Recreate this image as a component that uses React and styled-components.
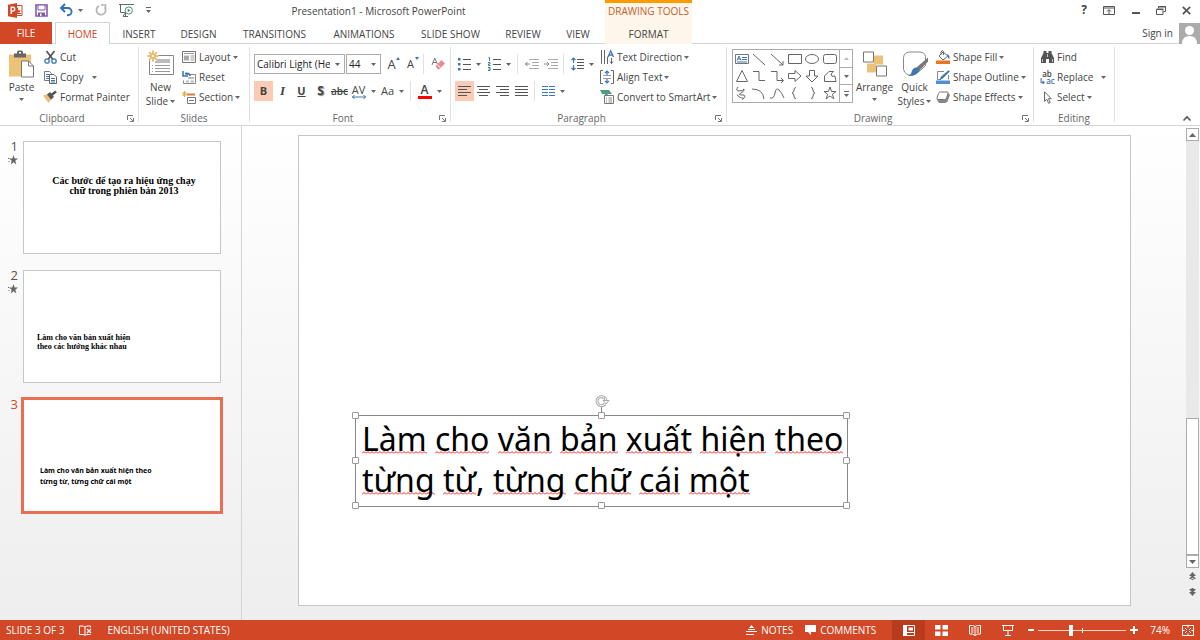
import React from 'react';
import styled, { createGlobalStyle } from 'styled-components';

const squiggle =
  "url(\"data:image/svg+xml,%3Csvg xmlns='http://www.w3.org/2000/svg' width='4' height='3'%3E%3Cpath d='M0 2.5L2 .5L4 2.5' fill='none' stroke='%23f02020'/%3E%3C/svg%3E\")";

const GlobalStyle = createGlobalStyle`
  * {
    box-sizing: border-box;
  }

  body {
    margin: 0;
    font-family: 'Open Sans', 'Noto Sans', sans-serif;
    font-size: 10px;
    line-height: 14px;
    color: #444;
    background: #fff;
  }

  button,
  select {
    margin: 0;
    padding: 0;
    border: 0;
    background: none;
    font: inherit;
    color: inherit;
    white-space: nowrap;
  }
`;

const App = () => (
  <Window>
    <GlobalStyle />
    <TitleBar />
    <Ribbon />
    <Main>
      <SlidePanel />
      <Editor />
    </Main>
    <StatusBar />
  </Window>
);

export default App;

/* ---------- icons ---------- */

const Icon = ({ w = 14, h = w, children }) => (
  <Svg width={w} height={h} viewBox={`0 0 ${w} ${h}`} aria-hidden="true">
    {children}
  </Svg>
);

const Svg = styled.svg`
  display: block;
  flex: none;
  fill: none;
  stroke-width: 1;
  overflow: visible;
`;

const Caret = () => (
  <Icon w={5} h={3}>
    <path d="M0 0h5L2.5 3z" fill="#666" />
  </Icon>
);

const PowerPointIcon = () => (
  <Icon w={15} h={15}>
    <path d="M6 2.5h8v10H6" fill="#fff" stroke="#d24726" />
    <path d="M10 4.500a2.600 2.600 0 1 0 2.500 2.700H10z" fill="#d24726" />
    <path d="M8 10.5h5M8 5h1" stroke="#d24726" />
    <path d="M0 1.8L9 0v15L0 13.2z" fill="#d24726" />
    <path d="M3.2 11V4.2h1.6a1.9 1.9 0 0 1 0 3.9H3.2" stroke="#fff" strokeWidth="1.4" />
  </Icon>
);

const SaveIcon = () => (
  <Icon w={13}>
    <path d="M1 1h11v11H1z" stroke="#8357b0" strokeWidth="1.6" />
    <path d="M3 1h7v5H3z" fill="#fff" stroke="#8357b0" />
    <path d="M3 8.5h7V12H3z" fill="#8357b0" />
    <path d="M5 9.5h1.5V12H5z" fill="#fff" />
  </Icon>
);

const UndoIcon = () => (
  <Icon w={13} h={12}>
    <path d="M2 4h6a3.6 3.6 0 0 1 0 7.2H7" stroke="#2f6fb7" strokeWidth="1.9" />
    <path d="M5 0L1 4l4 4" stroke="#2f6fb7" strokeWidth="1.9" />
  </Icon>
);

const RedoIcon = () => (
  <Icon w={12}>
    <path d="M9.600 3.200A4.600 4.600 0 1 1 4 2" stroke="#b4b4b4" strokeWidth="1.7" />
    <path d="M6 1h4.5v4.5" stroke="#b4b4b4" strokeWidth="1.5" />
  </Icon>
);

const StartShowIcon = () => (
  <Icon w={15} h={14}>
    <path d="M0 1.5h15M1.5 2v7.5H6M4 13l2.5-3M6.5 9.5v4M4 13.5h5" stroke="#666" />
    <circle cx="9.8" cy="7.5" r="3.6" fill="#fff" stroke="#4c8f76" />
    <path d="M8.7 5.7v3.6l3-1.8z" fill="#4c8f76" />
  </Icon>
);

const CustomizeIcon = () => (
  <Icon w={5} h={6}>
    <path d="M0 .5h5" stroke="#666" />
    <path d="M0 3h5L2.5 6z" fill="#666" />
  </Icon>
);

const PasteIcon = () => (
  <Icon w={25} h={27}>
    <path d="M0 4h22v22H0z" fill="#ecc277" />
    <path d="M5 3h3V1.5Q8 0 9.5 0h3Q14 0 14 1.5V3h3v4H5z" fill="#666" />
    <path d="M10 1.5h2V3h-2z" fill="#fff" />
    <path d="M12.500 10.500h7l5 5v11h-12z" fill="#fff" stroke="#777" />
    <path d="M19.5 10.5v5h5" stroke="#777" />
  </Icon>
);

const CutIcon = () => (
  <Icon w={13}>
    <path d="M2.5 0L9 8.5M10.5 0L4 8.5" stroke="#555" strokeWidth="1.7" />
    <circle cx="3" cy="10" r="2.2" stroke="#3f77b5" strokeWidth="1.3" />
    <circle cx="10" cy="10" r="2.2" stroke="#3f77b5" strokeWidth="1.3" />
  </Icon>
);

const CopyIcon = () => (
  <Icon w={13}>
    <path d="M.5.5h5l2 2v7h-7z" fill="#fff" stroke="#777" />
    <path d="M2 3.5h3M2 5.5h3M2 7.5h3" stroke="#3f77b5" />
    <path d="M5.5 3.5H10L12.5 6v6.5h-7z" fill="#fff" stroke="#666" />
    <path d="M7 7.5h4M7 9.5h4M7 11h4" stroke="#3f77b5" />
  </Icon>
);

const PainterIcon = () => (
  <Icon w={14} h={12}>
    <path d="M0 4.500L5 3l4 4.500L5.500 12z" fill="#ecbd74" />
    <path d="M4 3.500l3-2.500L11 6 8 8.500z" fill="#555" />
    <path d="M8.500 4L13 .5" stroke="#555" strokeWidth="2.5" />
  </Icon>
);

const NewSlideIcon = () => (
  <Icon w={26} h={26}>
    <path d="M1.5 4.5h24v19h-24z" fill="#fff" stroke="#888" />
    <path d="M7 8h15v4H7z" fill="#bbb" />
    <path d="M7 14.5h15M7 17.5h15M7 20.5h15M4 14.5h1M4 17.5h1M4 20.5h1" stroke="#999" />
    <circle cx="5" cy="5" r="5.5" fill="#fff" />
    <path d="M5-.5v11M-.5 5h11M1.2 1.2l7.6 7.6M8.8 1.2L1.2 8.8" stroke="#e9a847" strokeWidth="1.5" />
    <circle cx="5" cy="5" r="2" fill="#fff" stroke="#e9a847" />
  </Icon>
);

const LayoutIcon = () => (
  <Icon w={14} h={13}>
    <path d="M.5.5h13v11H.5z" fill="#fff" stroke="#777" />
    <path d="M2 2.5h10" stroke="#999" />
    <path d="M2 4.500h5v5H2z" fill="#aaa" />
    <path d="M8.500 5h4M8.500 7h4M8.500 9h4" stroke="#999" />
  </Icon>
);

const ResetIcon = () => (
  <Icon w={14} h={13}>
    <path d="M3.5 3.5h10v9h-12v-3" fill="#fff" stroke="#888" />
    <path d="M6 6h6v2H6zM4 9.500h3v2H4zM8.500 9.500H12v2H8.500z" fill="#bbb" />
    <path d="M8 5Q8 1.500 3 2.500M1 0v5h5" stroke="#3473b7" strokeWidth="1.5" />
  </Icon>
);

const SectionIcon = () => (
  <Icon w={14} h={13}>
    <path d="M5 3.5h8" stroke="#d87a3b" strokeWidth="2" />
    <path d="M5.5 6.5h8v6h-8z" fill="#fff" stroke="#777" />
    <path d="M7 9.5h5" stroke="#777" />
    <path d="M2.500 0v6M0 3h5M.8 1l3.600 4M4.400 1L.8 5" stroke="#e9a847" />
  </Icon>
);

const EraserIcon = () => (
  <Icon w={14}>
    <path d="M1 8L3.7 1l2.700 6M2 5.500h3.500" stroke="#777" />
    <path d="M4.500 9l6-6L14 6.500l-6 6H7z" fill="#e78b94" />
    <path d="M6 7.500l3.500 3.500" stroke="#fff" />
  </Icon>
);

const KerningIcon = () => (
  <Icon w={14} h={4}>
    <path d="M0 2h14M2.5 0L.5 2l2 2M11.5 0l2 2-2 2" stroke="#3f77b5" />
  </Icon>
);

const Lines = ({ d }) => (
  <Icon w={13} h={12}>
    <path d={d} stroke="#555" />
  </Icon>
);

const BulletsIcon = () => (
  <Icon w={13} h={14}>
    <path d="M5 2.5h8M5 7.5h8M5 12.5h8" stroke="#555" />
    <path d="M0 1h2.5v2.5H0zM0 6h2.5v2.5H0zM0 11h2.5v2.5H0z" fill="#3f77b5" />
  </Icon>
);

const NumberingIcon = () => (
  <Icon w={13} h={14}>
    <path d="M5 2.5h8M5 7.5h8M5 12.5h8" stroke="#555" />
    <path d="M.5.5h1V4M0 5.500h2V7H.5v1.500h2M0 10.500h2v3H0M.5 12H2" stroke="#3f77b5" />
  </Icon>
);

const IndentIcon = ({ flip }) => (
  <Icon w={14} h={12}>
    <path d="M4 1.5h10M7 4.5h7M7 7.5h7M4 10.5h10" stroke="#aaa" />
    <path d={flip ? 'M0 6h5M3 4l2 2-2 2' : 'M0 6h5M2.5 4L.5 6l2 2'} stroke="#888" />
  </Icon>
);

const LineSpacingIcon = () => (
  <Icon w={13} h={14}>
    <path d="M6 2.5h7M6 5.5h7M6 8.5h7M6 11.5h7" stroke="#555" />
    <path d="M2.500 1v5M.5 3l2-2 2 2M2.500 8v5M.5 11l2 2 2-2" stroke="#3f77b5" strokeWidth="1.2" />
  </Icon>
);

const ColumnsIcon = () => (
  <Icon w={13} h={10}>
    <path d="M0 .5h6M0 3.5h6M0 6.5h6M0 9.5h6M7 .5h6M7 3.5h6M7 6.5h6M7 9.5h6" stroke="#3f77b5" />
  </Icon>
);

const DirectionIcon = () => (
  <Icon w={13} h={14}>
    <path d="M.5 0v14M3.5 0v14M6.500 7v7M10.500 8v6" stroke="#666" />
    <path d="M9 11.500l1.500 2 1.500-2" stroke="#666" />
    <path d="M7 7L9.700.8 12.500 7M8 5h3.500" stroke="#3f77b5" strokeWidth="1.3" />
  </Icon>
);

const AlignTextIcon = () => (
  <Icon w={14}>
    <path d="M3 .5H.5v13H3M11 .5h2.5v13H11" stroke="#666" />
    <path d="M3 5.5h8M3 8.5h8" stroke="#999" />
    <path d="M7 1v4M5 3l2-2 2 2M7 9v4M5 11l2 2 2-2" stroke="#3f77b5" strokeWidth="1.2" />
  </Icon>
);

const SmartArtIcon = () => (
  <Icon w={14}>
    <path d="M0 0h9l3 4H8L5 8V4H2z" fill="#4f9a80" />
    <path d="M4.5 5.5h9v8h-9z" fill="#fff" stroke="#777" />
    <path d="M6 8h1M8.5 8H12M6 10h1M8.5 10H12M6 12h1M8.5 12H12" stroke="#888" />
  </Icon>
);

const ArrangeIcon = () => (
  <Icon w={24} h={25}>
    <path d="M11 4h9v9h-9zM4 12h9v9H4z" fill="#ecc277" />
    <path d="M.5.5h10v10H.5z" fill="#fff" stroke="#777" />
    <path d="M13.5 14.5h10v10h-10z" fill="#fff" stroke="#777" />
  </Icon>
);

const QuickStylesIcon = () => (
  <Icon w={26} h={27}>
    <path d="M6 24.500Q2 22 1.500 19V7Q2 2 7 1.500h11Q23 2 23.500 6v9l-5 5-10 4.500z" fill="#fff" stroke="#888" />
    <path d="M26 7v4l-8.500 9-3-3z" fill="#777" />
    <path d="M14 17q3 0 3.500 3.500Q14 26 6.500 25.500q3-1.500 3-4Q11 17 14 17z" fill="#3f77b5" />
  </Icon>
);

const FillIcon = () => (
  <Icon w={14}>
    <path d="M3 6l4-4 5 4-5 4z" fill="#fff" stroke="#666" />
    <path d="M5 5V2q1.500-3 2.500 0v3" stroke="#666" />
    <path d="M11 4q3 1 2.500 5-2-1-2-3.500" fill="#3f77b5" />
    <path d="M0 10.500h14V14H0z" fill="#e97424" />
  </Icon>
);

const OutlineIcon = () => (
  <Icon w={14}>
    <path d="M8 1.500H1.500v8H5M12.500 5v4.500" stroke="#888" />
    <path d="M12.500.5l1 1-7 7-2.500 1 1-2.500z" fill="#3f77b5" stroke="#3f77b5" strokeWidth=".5" />
    <path d="M0 10.500h14V14H0z" fill="#4f8fd2" />
  </Icon>
);

const EffectsIcon = () => (
  <Icon w={14} h={13}>
    <path d="M1 9l2 3h6.500l2-1.500L14 4l-2-2.500z" fill="#888" />
    <path d="M4.500 1h6.500q1.500 0 1 1.500L10.500 7q-.5 1.500-2 1.500H2Q.5 8.500 1 7l1.500-4.500Q3 1 4.500 1z" fill="#fff" stroke="#777" />
  </Icon>
);

const FindIcon = () => (
  <Icon w={13} h={12}>
    <path d="M2.5 0h3v2h2V0h3v2L13 7v5H8V8H5v4H0V7l2.5-5z" fill="#555" />
    <path d="M1.5 8v3M11.5 8v3M6.5 3v3" stroke="#ddd" strokeWidth=".8" />
  </Icon>
);

const SelectIcon = () => (
  <Icon w={9} h={13}>
    <path d="M1.5.8v9.5l2.3-2 1.8 4 1.6-.8-1.7-3.8h2.8z" fill="#fff" stroke="#666" />
  </Icon>
);

const LauncherIcon = () => (
  <Icon w={7}>
    <path d="M.5 5V.5H6M3 3l3 3M6.5 3v3.5H3" stroke="#777" />
  </Icon>
);

const StarIcon = () => (
  <Icon w={10}>
    <path d="M5.5 0l1.2 3.5H10L7.3 5.7l1 3.8-2.8-2.2-2.8 2.2 1-3.8L1 3.5h3.3zM0 3h1v1H0zM.5 6h1v1h-1z" fill="#666" />
  </Icon>
);

/* ---------- title bar and tabs ---------- */

const tabs = [
  ['HOME', 55],
  ['INSERT', 58],
  ['DESIGN', 61],
  ['TRANSITIONS', 91],
  ['ANIMATIONS', 88],
  ['SLIDE SHOW', 85],
  ['REVIEW', 60],
  ['VIEW', 50],
];

const TitleBar = () => (
  <Header>
    <TitleRow>
      <QuickAccess>
        <PowerPointIcon />
        <PlainButton aria-label="Save"><SaveIcon /></PlainButton>
        <PlainButton aria-label="Undo"><UndoIcon /><Caret /></PlainButton>
        <PlainButton aria-label="Redo"><RedoIcon /></PlainButton>
        <PlainButton aria-label="Start slide show"><StartShowIcon /></PlainButton>
        <PlainButton aria-label="Customize"><CustomizeIcon /></PlainButton>
      </QuickAccess>
      <Title>Presentation1 - Microsoft PowerPoint</Title>
    </TitleRow>
    <Contextual>
      <span>DRAWING TOOLS</span>
      <Tab $w={87}>FORMAT</Tab>
    </Contextual>
    <WindowControls>
      <PlainButton aria-label="Help">
        <HelpMark>?</HelpMark>
      </PlainButton>
      <PlainButton aria-label="Ribbon display options">
        <Icon w={12} h={9}>
          <path d="M.5.5h11v8H.5zM0 2h12M6 8V4M4 5.5l2-2 2 2" stroke="#555" />
        </Icon>
      </PlainButton>
      <PlainButton aria-label="Minimize">
        <Icon w={9} h={9}><path d="M1 7h8" stroke="#555" strokeWidth="2" /></Icon>
      </PlainButton>
      <PlainButton aria-label="Restore">
        <Icon w={10} h={9}>
          <path d="M2.5 2V.5h7v5h-2M.5 3.5H7v5H.5zM.5 3h7M2 1h8" stroke="#555" />
        </Icon>
      </PlainButton>
      <PlainButton aria-label="Close">
        <Icon w={9} h={9}><path d="M.8.8l7.4 7.4M8.2.8L.8 8.2" stroke="#555" strokeWidth="1.7" /></Icon>
      </PlainButton>
    </WindowControls>
    <TabRow>
      <FileTab>FILE</FileTab>
      {tabs.map(([name, w]) => (
        <Tab key={name} $w={w} $active={name === 'HOME'}>{name}</Tab>
      ))}
    </TabRow>
    <Account>
      <PlainButton>Sign in</PlainButton>
      <Icon w={21} h={21}>
        <path d="M0 0h21v21H0z" fill="#ababab" />
        <circle cx="10.5" cy="7.5" r="4.5" fill="#fff" />
        <path d="M3 21q0-8 7.500-8t7.500 8z" fill="#fff" />
      </Icon>
    </Account>
  </Header>
);

const Window = styled.div`
  display: flex;
  flex-direction: column;
  min-height: 100vh;
`;

const Header = styled.header`
  display: grid;
  grid-template-columns: auto auto 1fr;
  grid-template-rows: 22px 22px;
  border-bottom: 1px solid #d4d4d4;
  height: 44px;
`;

const TitleRow = styled.div`
  display: flex;
  align-items: center;
`;

const QuickAccess = styled.div`
  display: flex;
  align-items: center;
  flex: none;
  gap: 12px;
  width: 152px;
  padding-left: 8px;
  padding-bottom: 2px;
`;

const PlainButton = styled.button`
  display: flex;
  align-items: center;
  gap: 5px;
`;

const Title = styled.div`
  flex: 1;
  text-align: center;
`;

const Contextual = styled.div`
  grid-row: 1 / span 2;
  grid-column: 2;
  display: flex;
  flex-direction: column;
  align-items: center;
  justify-content: space-between;
  padding-top: 1px;
  background: #fef6ea;
  border-top: 3px solid #ff9a00;
  color: #c5602c;
`;

const WindowControls = styled.div`
  display: flex;
  justify-content: flex-end;
  align-items: center;
  gap: 16px;
  padding-right: 9px;
  padding-bottom: 2px;
`;

const HelpMark = styled.b`
  font-size: 12px;
`;

const TabRow = styled.nav`
  grid-row: 2;
  grid-column: 1;
  display: flex;
  padding-right: 2px;
`;

const Tab = styled.button`
  width: ${({ $w }) => $w}px;
  height: 22px;
  text-align: center;
  color: ${({ $active }) => ($active ? '#d24726' : '#444')};
  background: ${({ $active }) => ($active ? '#fff' : 'none')};
  border: 1px solid ${({ $active }) => ($active ? '#d4d4d4' : 'transparent')};
  border-bottom: 0;
`;

const FileTab = styled.button`
  width: 52px;
  height: 22px;
  margin-right: 3px;
  background: #d24726;
  color: #fff;
`;

const Account = styled.div`
  grid-column: 3;
  display: flex;
  justify-content: flex-end;
  align-items: center;
  gap: 6px;
`;

/* ---------- ribbon ---------- */

const Command = ({ icon, label, caret, gap }) => (
  <CommandButton>
    <IconSlot>{icon}</IconSlot>
    {label}
    {caret && <CaretSlot $gap={gap}><Caret /></CaretSlot>}
  </CommandButton>
);

const Group = ({ name, width, launcher, children }) => (
  <GroupBox $w={width}>
    <GroupBody>{children}</GroupBody>
    <GroupFooter $launcher={launcher}>
      <span>{name}</span>
      {launcher && <Launcher aria-label={`${name} options`}><LauncherIcon /></Launcher>}
    </GroupFooter>
  </GroupBox>
);

const shapes = [
  <><path d="M1.5 3.5h13v9h-13z" stroke="#777" /><path d="M3 9.500L5 5l2 4.500M4 8h2M8 6.500h5M8 8.500h5M3 11h10" stroke="#3f77b5" /></>,
  <path d="M2 3l12 11" />,
  <path d="M2 3l12 11M14 10v4h-4" />,
  <path d="M1.5 3.5h13v9h-13z" />,
  <ellipse cx="8" cy="8" rx="6.5" ry="4.5" />,
  <rect x="1.5" y="3.5" width="13" height="9" rx="2" />,
  <path d="M8 2.500l5.500 11h-11z" />,
  <path d="M2 3.500h6v9h6" />,
  <path d="M2 3.500h6v9h6M12 10l2.500 2.500L12 15" />,
  <path d="M1.500 5.500H8v-3L14 8l-6 5.500v-3H1.500z" />,
  <path d="M5.500 2.500h5V8H14l-6 6-6-6h3.500z" />,
  <path d="M2.500 13.500V8L7 3.500h4.500Q9 5 9 7t4 1l1 5.500z" />,
  <path d="M4 2Q1 6 5 6t5-2q1 2-3 4t2 2q3 0 1 3t-2-1M3 10l4 3" />,
  <path d="M1 4q11 0 12 10" />,
  <path d="M1 13q4 1 5-5t4-3 5 8" />,
  <path d="M9 2.500Q7 2.500 7 5t-2 3q2 0 2 3t2 2.500" />,
  <path d="M7 2.500q2 0 2 2.500t2 3q-2 0-2 3t-2 2.500" />,
  <path d="M8 2l1.600 4.500H14l-3.600 2.800 1.400 4.500L8 11l-3.800 2.800 1.400-4.500L2 6.500h4.400z" />,
];

const Ribbon = () => (
  <RibbonBar>
    <Group name="Clipboard" width={139} launcher>
      <LargeButton $w={43}>
        <PasteIcon />
        <span>Paste</span>
        <Caret />
      </LargeButton>
      <Stack>
        <Command icon={<CutIcon />} label="Cut" />
        <Command icon={<CopyIcon />} label="Copy" caret gap={9} />
        <Command icon={<PainterIcon />} label="Format Painter" />
      </Stack>
    </Group>
    <Group name="Slides" width={111}>
      <LargeButton $w={43}>
        <NewSlideIcon />
        <span>New</span>
        <CaretLine>Slide <Caret /></CaretLine>
      </LargeButton>
      <Stack>
        <Command icon={<LayoutIcon />} label="Layout" caret />
        <Command icon={<ResetIcon />} label="Reset" />
        <Command icon={<SectionIcon />} label="Section" caret />
      </Stack>
    </Group>
    <Group name="Font" width={201} launcher>
      <Rows>
        <Row>
          <Combo $w={91}>
            <select aria-label="Font"><option>Calibri Light (Headings)</option></select>
            <Caret />
          </Combo>
          <Combo $w={35}>
            <select aria-label="Font size"><option>44</option></select>
            <Caret />
          </Combo>
          <Tool aria-label="Increase font size">
            <Glyph $size={13}>A</Glyph>
            <Raise><Icon w={4} h={3}><path d="M0 3h4L2 0z" fill="#3f77b5" /></Icon></Raise>
          </Tool>
          <Tool aria-label="Decrease font size">
            <Glyph $size={11}>A</Glyph>
            <Raise><Icon w={4} h={3}><path d="M0 0h4L2 3z" fill="#3f77b5" /></Icon></Raise>
          </Tool>
          <Rule />
          <Tool aria-label="Clear formatting"><EraserIcon /></Tool>
        </Row>
        <Row>
          <Tool $on aria-label="Bold"><Glyph as="b">B</Glyph></Tool>
          <Tool aria-label="Italic"><SerifGlyph>I</SerifGlyph></Tool>
          <Tool aria-label="Underline"><Glyph as="u">U</Glyph></Tool>
          <Tool aria-label="Shadow"><ShadowGlyph>S</ShadowGlyph></Tool>
          <Tool aria-label="Strikethrough"><Struck>abc</Struck></Tool>
          <Tool $w={29} aria-label="Character spacing">
            <KernBox><span>AV</span><KerningIcon /></KernBox>
            <Caret />
          </Tool>
          <Tool $w={29} aria-label="Change case"><Case>Aa</Case> <Caret /></Tool>
          <Rule />
          <Tool $w={29} aria-label="Font color">
            <ColorBar>A</ColorBar>
            <Caret />
          </Tool>
        </Row>
      </Rows>
    </Group>
    <Group name="Paragraph" width={276} launcher>
      <Rows $w={149}>
        <Row>
          <Tool $w={29} aria-label="Bullets"><BulletsIcon /><Caret /></Tool>
          <Tool $w={30} aria-label="Numbering"><NumberingIcon /><Caret /></Tool>
          <Rule />
          <Tool aria-label="Decrease indent"><IndentIcon /></Tool>
          <Tool aria-label="Increase indent"><IndentIcon flip /></Tool>
          <Rule />
          <Tool $w={29} aria-label="Line spacing"><LineSpacingIcon /><Caret /></Tool>
        </Row>
        <Row>
          <Tool $on aria-label="Align left"><Lines d="M0 1.5h13M0 4.5h9M0 7.5h13M0 10.5h9" /></Tool>
          <Tool aria-label="Center"><Lines d="M0 1.5h13M2 4.5h9M0 7.5h13M2 10.5h9" /></Tool>
          <Tool aria-label="Align right"><Lines d="M0 1.5h13M4 4.5h9M0 7.5h13M4 10.5h9" /></Tool>
          <Tool aria-label="Justify"><Lines d="M0 1.5h13M0 4.5h13M0 7.5h13M0 10.5h13" /></Tool>
          <Rule />
          <Tool $w={29} aria-label="Columns"><ColumnsIcon /><Caret /></Tool>
        </Row>
      </Rows>
      <Stack>
        <Command icon={<DirectionIcon />} label="Text Direction" caret />
        <Command icon={<AlignTextIcon />} label="Align Text" caret />
        <Command icon={<SmartArtIcon />} label="Convert to SmartArt" caret />
      </Stack>
    </Group>
    <Group name="Drawing" width={307} launcher>
      <Gallery>
        <ShapeGrid>
          {shapes.map((shape, i) => (
            <PlainButton key={i} aria-label={`Shape ${i + 1}`}>
              <Icon w={16}><g stroke="#666">{shape}</g></Icon>
            </PlainButton>
          ))}
        </ShapeGrid>
        <GalleryScroll>
          <button aria-label="Previous shapes"><Icon w={5} h={3}><path d="M0 3h5L2.5 0z" fill="#bbb" /></Icon></button>
          <button aria-label="Next shapes"><Caret /></button>
          <button aria-label="More shapes"><CustomizeIcon /></button>
        </GalleryScroll>
      </Gallery>
      <LargeButton $w={43}>
        <ArrangeIcon />
        <span>Arrange</span>
        <Caret />
      </LargeButton>
      <LargeButton $w={37}>
        <QuickStylesIcon />
        <span>Quick</span>
        <CaretLine>Styles <Caret /></CaretLine>
      </LargeButton>
      <Stack $inset={3}>
        <Command icon={<FillIcon />} label="Shape Fill" caret />
        <Command icon={<OutlineIcon />} label="Shape Outline" caret />
        <Command icon={<EffectsIcon />} label="Shape Effects" caret />
      </Stack>
    </Group>
    <Group name="Editing" width={81}>
      <Stack $inset={6}>
        <Command icon={<FindIcon />} label="Find" />
        <Command icon={<ReplaceMark><span>ab</span><span>↳ac</span></ReplaceMark>} label="Replace" caret gap={8} />
        <Command icon={<SelectIcon />} label="Select" caret />
      </Stack>
    </Group>
    <Collapse aria-label="Collapse the ribbon">
      <Icon w={8} h={5}><path d="M.5 4.5L4 1l3.5 3.5" stroke="#555" strokeWidth="1.6" /></Icon>
    </Collapse>
  </RibbonBar>
);

const RibbonBar = styled.section`
  display: flex;
  height: 82px;
  padding: 3px 0;
  border-bottom: 1px solid #d4d4d4;
`;

const GroupBox = styled.div`
  display: flex;
  flex-direction: column;
  flex: none;
  width: ${({ $w }) => $w}px;
  border-right: 1px solid #e1e1e1;
`;

const GroupBody = styled.div`
  display: flex;
  flex: 1;
`;

const GroupFooter = styled.div`
  position: relative;
  height: 8px;
  line-height: 8px;
  padding-right: ${({ $launcher }) => ($launcher ? 14 : 0)}px;
  text-align: center;
  color: #666;
`;

const Launcher = styled.button`
  position: absolute;
  right: 4px;
  top: 1px;
`;

const LargeButton = styled.button`
  display: flex;
  flex-direction: column;
  align-items: center;
  flex: none;
  width: ${({ $w }) => $w}px;
  height: 62px;
  padding-top: 3px;

  span {
    line-height: 14px;
  }

  > svg:first-child {
    height: 28px;
    margin-bottom: 2px;
  }

  > svg:last-child {
    margin-top: 4px;
  }
`;

const CaretLine = styled.span`
  display: flex;
  align-items: center;
  gap: 2px;
`;

const Stack = styled.div`
  display: flex;
  flex-direction: column;
  padding-left: ${({ $inset = 0 }) => $inset}px;
`;

const CommandButton = styled.button`
  display: flex;
  align-items: center;
  height: 20px;
`;

const IconSlot = styled.span`
  display: flex;
  justify-content: center;
  width: 14px;
  margin-right: 3px;
`;

const CaretSlot = styled.span`
  margin-left: ${({ $gap = 2 }) => $gap}px;
`;

const Rows = styled.div`
  display: flex;
  flex-direction: column;
  gap: 7px;
  flex: none;
  width: ${({ $w }) => ($w ? `${$w}px` : 'auto')};
  padding: 7px 0 0 4px;
`;

const Row = styled.div`
  display: flex;
  align-items: center;
  height: 20px;
`;

const Combo = styled.div`
  display: flex;
  align-items: center;
  gap: 5px;
  width: ${({ $w }) => $w}px;
  height: 20px;
  margin-right: 1px;
  padding: 0 4px 0 2px;
  border: 1px solid #ababab;
  color: #222;

  select {
    flex: 1;
    min-width: 0;
    appearance: none;
    overflow: hidden;
    text-overflow: clip;
  }
`;

const Tool = styled.button`
  position: relative;
  display: flex;
  align-items: center;
  justify-content: center;
  gap: 5px;
  flex: none;
  width: ${({ $w = 19 }) => $w}px;
  height: 20px;
  background: ${({ $on }) => ($on ? '#fbcbb5' : 'none')};
`;

const Glyph = styled.span`
  font-size: ${({ $size = 11 }) => $size}px;
  font-weight: ${({ $size }) => ($size ? 400 : 700)};
`;

const Raise = styled.i`
  position: absolute;
  top: 3px;
  right: 1px;
`;

const SerifGlyph = styled.i`
  font-family: 'Liberation Serif', serif;
  font-size: 13px;
  font-weight: 700;
`;

const ShadowGlyph = styled.b`
  font-size: 12px;
  text-shadow: 1px 1px 1px #888;
`;

const Struck = styled.s`
  font-weight: 600;
`;

const Case = styled.span`
  font-size: 11px;
`;

const KernBox = styled.span`
  display: flex;
  flex-direction: column;
  align-items: center;
  font-size: 11px;
  line-height: 11px;
`;

const ColorBar = styled.span`
  width: 14px;
  font-size: 12px;
  font-weight: 600;
  line-height: 12px;
  border-bottom: 3px solid #f00;
`;

const Rule = styled.span`
  width: 1px;
  height: 20px;
  margin: 0 4px 0 3px;
  background: #e1e1e1;
`;

const Gallery = styled.div`
  display: flex;
  flex: none;
  width: 121px;
  height: 54px;
  margin: 2px 0 0 5px;
  border: 1px solid #ababab;
`;

const ShapeGrid = styled.div`
  display: grid;
  flex: 1;
  grid-template-columns: repeat(6, 1fr);
  align-items: center;
  justify-items: center;
`;

const GalleryScroll = styled.div`
  display: flex;
  flex-direction: column;
  width: 13px;

  button {
    display: flex;
    flex: 1;
    align-items: center;
    justify-content: center;
    border-left: 1px solid #ababab;
  }

  button + button {
    border-top: 1px solid #ababab;
  }
`;

const ReplaceMark = styled.span`
  display: flex;
  flex-direction: column;
  font-size: 8px;
  font-weight: 600;
  line-height: 7px;

  span:last-child {
    color: #3f77b5;
  }
`;

const Collapse = styled.button`
  display: flex;
  align-items: flex-end;
  margin-left: auto;
  padding: 0 9px 1px 0;
`;

/* ---------- slide panel ---------- */

const SlidePanel = () => (
  <Panel>
    <ThumbRow>
      <Marker><span>1</span><StarIcon /></Marker>
      <Thumb>
        <CenteredCaption>
          Các bước để tạo ra hiệu ứng chạy<br />chữ trong phiên bản 2013
        </CenteredCaption>
      </Thumb>
    </ThumbRow>
    <ThumbRow>
      <Marker><span>2</span><StarIcon /></Marker>
      <Thumb>
        <LowerCaption>
          Làm cho văn bản xuất hiện<br />theo các hướng khác nhau
        </LowerCaption>
      </Thumb>
    </ThumbRow>
    <ThumbRow>
      <Marker $active><span>3</span></Marker>
      <Thumb $active>
        <SansCaption>
          Làm cho văn bản xuất hiện theo<br />từng từ, từng chữ cái một
        </SansCaption>
      </Thumb>
    </ThumbRow>
  </Panel>
);

const Main = styled.main`
  display: flex;
  flex: 1;
  background: linear-gradient(#fff, #eee);
`;

const Panel = styled.aside`
  display: flex;
  flex-direction: column;
  gap: 16px;
  flex: none;
  width: 242px;
  padding-top: 15px;
  border-right: 1px solid #d4d4d4;
`;

const ThumbRow = styled.div`
  display: flex;
`;

const Marker = styled.div`
  display: flex;
  flex-direction: column;
  align-items: flex-end;
  gap: 3px;
  flex: none;
  width: 18px;
  margin-right: 5px;
  font-size: 13px;
  line-height: 11px;
  color: ${({ $active }) => ($active ? '#d24726' : '#555')};
`;

const Thumb = styled.div`
  width: 198px;
  height: 113px;
  background: #fff;
  color: #000;
  outline: ${({ $active }) => ($active ? '2px solid #ea6f52' : 'none')};
  border: 1px solid ${({ $active }) => ($active ? '#ea6f52' : '#c6c6c6')};
`;

const Caption = styled.p`
  margin: 0;
  font-family: 'Liberation Serif', serif;
  font-weight: 700;
  white-space: nowrap;
`;

const CenteredCaption = styled(Caption)`
  padding-top: 34px;
  padding-left: 4px;
  font-size: 10px;
  line-height: 10px;
  text-align: center;
`;

const LowerCaption = styled(Caption)`
  padding: 62px 0 0 13px;
  font-size: 8px;
  line-height: 9px;
`;

const SansCaption = styled(Caption)`
  padding: 65px 0 0 16px;
  font-family: 'Noto Sans', sans-serif;
  font-size: 7px;
  line-height: 11px;
`;

/* ---------- slide editor ---------- */

const lines = [
  ['Làm', 'cho', 'văn', 'bản', 'xuất', 'hiện', 'theo'],
  ['từng', 'từ,', 'từng', 'chữ', 'cái', 'một'],
];

const handles = [
  [0, 0], [50, 0], [100, 0],
  [0, 50], [100, 50],
  [0, 100], [50, 100], [100, 100],
];

const Editor = () => (
  <EditorArea>
    <Slide>
      <TextBox>
        {lines.map((words, i) => (
          <Line key={i}>
            {words.map((word, j) => (
              <React.Fragment key={j}>
                <Misspelt>{word.replace(',', '')}</Misspelt>
                {word.endsWith(',') && ','}
                {j < words.length - 1 && ' '}
              </React.Fragment>
            ))}
          </Line>
        ))}
        {handles.map(([x, y]) => (
          <Handle key={`${x}-${y}`} $x={x} $y={y} />
        ))}
        <Rotate>
          <Icon w={14} h={21}>
            <path d="M6.5 11v7" stroke="#888" />
            <path d="M10 9a4.500 4.500 0 1 1 1-3" stroke="#aaa" strokeWidth="3" />
            <path d="M10 9a4.500 4.500 0 1 1 1-3" stroke="#fff" />
            <path d="M8 5.500h6L11 9z" fill="#fff" stroke="#aaa" />
          </Icon>
        </Rotate>
      </TextBox>
    </Slide>
    <Scroll>
      <ScrollButton aria-label="Scroll up"><Icon w={7} h={4}><path d="M0 4h7L3.5 0z" fill="#666" /></Icon></ScrollButton>
      <ScrollTrack><ScrollThumb /></ScrollTrack>
      <ScrollButton aria-label="Scroll down"><Icon w={7} h={4}><path d="M0 0h7L3.5 4z" fill="#666" /></Icon></ScrollButton>
      <PageButton aria-label="Previous slide">
        <Icon w={7} h={8}><path d="M0 4h7L3.5 0zM0 7h7L3.5 3zM2.5 6h2v2h-2z" fill="#666" /></Icon>
      </PageButton>
      <PageButton aria-label="Next slide">
        <Icon w={7} h={8}><path d="M0 1h7L3.5 5zM0 4h7L3.5 8zM2.5 0h2v2h-2z" fill="#666" /></Icon>
      </PageButton>
    </Scroll>
  </EditorArea>
);

const EditorArea = styled.div`
  display: flex;
  flex: 1;
  padding-left: 56px;
`;

const Slide = styled.div`
  position: relative;
  flex: 1;
  margin: 9px 55px 14px 0;
  background: #fff;
  border: 1px solid #c6c6c6;
`;

const TextBox = styled.div`
  position: absolute;
  left: 56px;
  top: 279px;
  padding: 2px 4px 6px 6px;
  border: 1px solid #888;
  font-family: 'Noto Sans', sans-serif;
  font-size: 32px;
  line-height: 41px;
  color: #000;
  white-space: nowrap;
`;

const Line = styled.div`
  height: 41px;
`;

const Misspelt = styled.span`
  background: ${squiggle} left bottom 6px / 4px 3px repeat-x;
`;

const Handle = styled.i`
  position: absolute;
  left: ${({ $x }) => $x}%;
  top: ${({ $y }) => $y}%;
  width: 7px;
  height: 7px;
  margin: -4px;
  background: #fff;
  border: 1px solid #999;
  border-radius: 1px;
`;

const Rotate = styled.i`
  position: absolute;
  left: 50%;
  bottom: 100%;
  margin-left: -7px;
`;

const Scroll = styled.div`
  display: flex;
  flex-direction: column;
  align-items: center;
  width: 13px;
  margin: 2px 1px 20px 0;
`;

const ScrollButton = styled.button`
  display: flex;
  align-items: center;
  justify-content: center;
  width: 13px;
  height: 13px;
  background: #fff;
  border: 1px solid #ababab;
`;

const ScrollTrack = styled.div`
  display: flex;
  flex: 1;
  width: 13px;
  align-items: flex-end;
  background: #e9e9e9;
`;

const ScrollThumb = styled.div`
  width: 13px;
  height: 33%;
  background: #fff;
  border: 1px solid #ababab;
`;

const PageButton = styled.button`
  display: flex;
  align-items: center;
  height: 16px;
`;

/* ---------- status bar ---------- */

const StatusBar = () => (
  <Status>
    <span>SLIDE 3 OF 3</span>
    <StatusButton aria-label="Spelling">
      <Icon w={13} h={11}>
        <path d="M6 10.5V2Q5 1 3 1H.5v8.5H4q1.5 0 2 1zM6 2q1-1 3-1h2.500v1.500M6 10.500q.5-1 2-1h3.500" stroke="#fff" />
        <path d="M8 4l4 4M12 4L8 8" stroke="#fff" strokeWidth="1.3" />
      </Icon>
    </StatusButton>
    <StatusButton>ENGLISH (UNITED STATES)</StatusButton>
    <StatusRight>
      <StatusButton>
        <Icon w={11} h={10}>
          <path d="M5.5 0L8 3H3zM2 4h7v1H2z" fill="#fff" />
          <path d="M0 6.5h11M0 9.5h8" stroke="#fff" />
        </Icon>
        NOTES
      </StatusButton>
      <StatusButton>
        <Icon w={11} h={10}><path d="M0 0h11v7H6v3L3 7H0z" fill="#fff" /></Icon>
        COMMENTS
      </StatusButton>
      <Views>
        <ViewButton $active aria-label="Normal view">
          <Icon w={12} h={11}>
            <path d="M.5.5h11v10H.5zM3.5 0v11M3.5 7.5H12" stroke="#fff" />
            <path d="M0 0h3v11H0zM5.500 2.500h4.500v3H5.500z" fill="#fff" />
          </Icon>
        </ViewButton>
        <ViewButton aria-label="Slide sorter">
          <Icon w={13} h={11}><path d="M0 0h5.5v4.5H0zM7.5 0H13v4.5H7.5zM0 6.5h5.5V11H0zM7.5 6.5H13V11H7.5z" fill="#fff" /></Icon>
        </ViewButton>
        <ViewButton aria-label="Reading view">
          <Icon w={12} h={11}>
            <path d="M6 10.500V1.500Q4 0 .5.5V9Q4 8.500 6 10.500 8 8.500 11.500 9V.5Q8 0 6 1.500M2 3h2.500M2 5h2.500M2 7h2.500M7.500 3H10M7.500 5H10M7.500 7H10" stroke="#fff" />
          </Icon>
        </ViewButton>
        <ViewButton aria-label="Slide show">
          <Icon w={12} h={11}><path d="M0 .5h12M1.5 1v4.5h9V1M6 5.5v5M3 10.5h6" stroke="#fff" /></Icon>
        </ViewButton>
        <Zoom>
          <StatusButton aria-label="Zoom out"><Icon w={6} h={8}><path d="M0 4h6" stroke="#fff" strokeWidth="2" /></Icon></StatusButton>
          <ZoomSlider type="range" aria-label="Zoom" defaultValue={36} />
          <StatusButton aria-label="Zoom in"><Icon w={8}><path d="M0 4h8M4 0v8" stroke="#fff" strokeWidth="2" /></Icon></StatusButton>
        </Zoom>
      </Views>
      <StatusButton>74%</StatusButton>
      <StatusButton aria-label="Fit to window">
        <Icon w={12} h={11}>
          <path d="M.5.5h11v10H.5zM0 5.5h2.5M9.5 5.5H12M6 0v2.5M6 8.5V11M3 3l2 2M9 3L7 5M3 8l2-2M9 8L7 6" stroke="#fff" />
        </Icon>
      </StatusButton>
    </StatusRight>
  </Status>
);

const Status = styled.footer`
  display: flex;
  align-items: center;
  height: 20px;
  gap: 15px;
  padding: 0 6px;
  background: #d24726;
  color: #fff;
`;

const StatusRight = styled.div`
  display: flex;
  align-items: center;
  gap: 12px;
  margin-left: auto;
`;

const StatusButton = styled.button`
  display: flex;
  align-items: center;
  gap: 4px;
`;

const Views = styled.div`
  display: flex;
  margin-left: 4px;
`;

const ViewButton = styled.button`
  display: flex;
  align-items: center;
  justify-content: center;
  width: 33px;
  height: 20px;
  background: ${({ $active }) => ($active ? '#b83b1d' : 'none')};
`;

const Zoom = styled.div`
  display: flex;
  align-items: center;
  gap: 4px;
  padding-left: 4px;
`;

const ZoomSlider = styled.input`
  appearance: none;
  width: 88px;
  height: 12px;
  margin: 0;
  background:
    linear-gradient(#f6d3c9, #f6d3c9) center / 100% 1px no-repeat,
    linear-gradient(#fff, #fff) center / 1px 5px no-repeat;

  &::-webkit-slider-thumb {
    appearance: none;
    width: 4px;
    height: 11px;
    background: #fff;
  }
`;
